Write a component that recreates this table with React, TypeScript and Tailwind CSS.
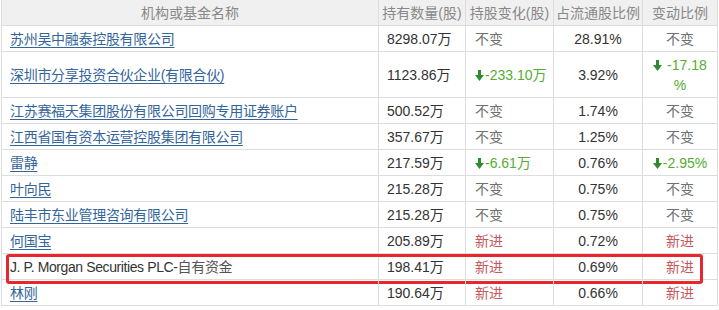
type Chg = { kind: "same" } | { kind: "new" } | { kind: "down"; text: string; unit?: string };

type Row = {
  name: string;
  link: boolean;
  qty: string;
  change: Chg;
  pct: string;
  ratio: Chg;
  mark?: boolean;
};

const same: Chg = { kind: "same" };
const fresh: Chg = { kind: "new" };

const rows: Row[] = [
  { name: "苏州吴中融泰控股有限公司", link: true, qty: "8298.07", change: same, pct: "28.91%", ratio: same },
  {
    name: "深圳市分享投资合伙企业(有限合伙)",
    link: true,
    qty: "1123.86",
    change: { kind: "down", text: "-233.10", unit: "万" },
    pct: "3.92%",
    ratio: { kind: "down", text: "-17.18" },
  },
  { name: "江苏赛福天集团股份有限公司回购专用证券账户", link: true, qty: "500.52", change: same, pct: "1.74%", ratio: same },
  { name: "江西省国有资本运营控股集团有限公司", link: true, qty: "357.67", change: same, pct: "1.25%", ratio: same },
  {
    name: "雷静",
    link: true,
    qty: "217.59",
    change: { kind: "down", text: "-6.61", unit: "万" },
    pct: "0.76%",
    ratio: { kind: "down", text: "-2.95%" },
  },
  { name: "叶向民", link: true, qty: "215.28", change: same, pct: "0.75%", ratio: same },
  { name: "陆丰市东业管理咨询有限公司", link: true, qty: "215.28", change: same, pct: "0.75%", ratio: same },
  { name: "何国宝", link: true, qty: "205.89", change: fresh, pct: "0.72%", ratio: fresh },
  { name: "J. P. Morgan Securities PLC-", link: false, qty: "198.41", change: fresh, pct: "0.69%", ratio: fresh, mark: true },
  { name: "林刚", link: true, qty: "190.64", change: fresh, pct: "0.66%", ratio: fresh },
];

function DownArrow() {
  return (
    <svg width="9" height="11" viewBox="0 0 9 11" className="inline-block mr-[1px] align-[-1px]">
      <rect x="3" y="0" width="3" height="6" fill="#2e8b2e" />
      <polygon points="0,5 9,5 4.5,11" fill="#2e8b2e" />
    </svg>
  );
}

function ChangeText({ c, wrap }: { c: Chg; wrap?: boolean }) {
  if (c.kind === "same") return <span className="text-[#707070]">不变</span>;
  if (c.kind === "new") return <span className="text-[#c4585c]">新进</span>;
  if (wrap)
    return (
      <span className="text-[#55ad32]">
        <DownArrow /> {c.text}
        <br />%
      </span>
    );
  return (
    <span className="text-[#55ad32]">
      <DownArrow />
      {c.text}
      {c.unit}
    </span>
  );
}

const grid = "grid grid-cols-[377px_87px_88px_89px_75px]";
const cell = "border-r border-b border-[#dddddd] pt-[3px] pb-[2px] flex items-center";

export default function App() {
  return (
    <div className="w-[719px] h-[310px] bg-white overflow-hidden font-['Liberation_Sans','Noto_Sans_CJK_SC',sans-serif] text-[14px] leading-[20px] text-[#333]">
      <div className="ml-[1px] w-[717px] border-l border-[#dddddd] flex flex-col">
        <div className={`${grid} bg-[#f0f0f0] text-[#888]`}>
          <div className={`${cell} justify-center h-[26px]`}>机构或基金名称</div>
          <div className={`${cell} justify-center h-[26px]`}>持有数量(股)</div>
          <div className={`${cell} justify-center h-[26px]`}>持股变化(股)</div>
          <div className={`${cell} justify-center h-[26px]`}>占流通股比例</div>
          <div className={`${cell} justify-center h-[26px]`}>变动比例</div>
        </div>
        {rows.map((r, i) => (
          <div key={i} className={`${grid} relative`}>
            <div className={`${cell} px-2`}>
              {r.link ? (
                <a className="text-[#34659a] tracking-[-0.3px] underline underline-offset-[3px] decoration-[#34659a]">{r.name}</a>
              ) : (
                <span>
                  <span className="tracking-[-0.4px]">{r.name}</span>
                  <span className="text-[#555] tracking-[-0.3px]">自有资金</span>
                </span>
              )}
            </div>
            <div className={`${cell} px-2`}>
              {r.qty}
              <span>万</span>
            </div>
            <div className={`${cell} pl-[9px]`}>
              <ChangeText c={r.change} />
            </div>
            <div className={`${cell} justify-center`}>{r.pct}</div>
            <div className={`${cell} justify-center text-center`}>
              <ChangeText c={r.ratio} wrap={r.ratio.kind === "down" && r.ratio.text === "-17.18"} />
            </div>
            {r.mark && (
              <div className="absolute left-[4px] top-0 w-[697px] h-[30px] border-[3px] border-[#e8262d] rounded-[3px] pointer-events-none" />
            )}
          </div>
        ))}
      </div>
    </div>
  );
}
